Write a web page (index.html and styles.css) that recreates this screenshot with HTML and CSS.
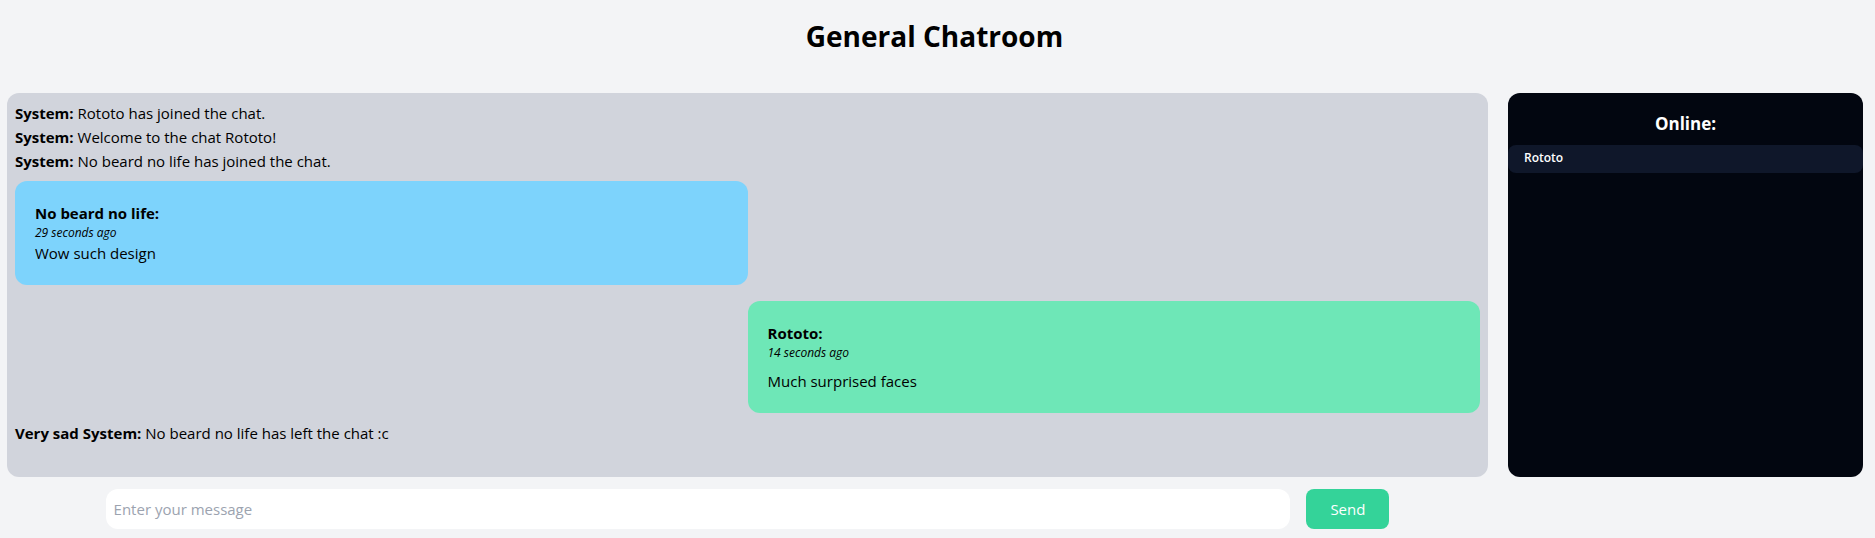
FILE: index.html
```
<!DOCTYPE html>
<html lang="en">
<head>
<meta charset="utf-8">
<meta name="viewport" content="width=device-width, initial-scale=1">
<title>General Chatroom</title>
<link rel="stylesheet" href="styles.css">
</head>
<body class="page">
<header class="header"><h1 class="title">General Chatroom</h1></header>
<main class="room">
  <section class="chat">
    <div class="messages">
      <p class="system"><strong>System:</strong> Rototo has joined the chat.</p>
      <p class="system"><strong>System:</strong> Welcome to the chat Rototo!</p>
      <p class="system"><strong>System:</strong> No beard no life has joined the chat.</p>
      <article class="message">
        <h2 class="author">No beard no life:</h2>
        <p class="time">29 seconds ago</p>
        <p class="text">Wow such design</p>
      </article>
      <article class="message message-own">
        <h2 class="author">Rototo:</h2>
        <p class="time">14 seconds ago</p>
        <p class="text">Much surprised faces</p>
      </article>
      <p class="system"><strong>Very sad System:</strong> No beard no life has left the chat :c</p>
    </div>
    <form class="composer">
      <input class="field" type="text" placeholder="Enter your message" aria-label="Enter your message">
      <button class="send" type="button">Send</button>
    </form>
  </section>
  <aside class="online">
    <h2 class="online-title">Online:</h2>
    <ul class="users"><li class="user">Rototo</li></ul>
  </aside>
</main>
</body>
</html>
```
FILE: styles.css
```
* { box-sizing: border-box; margin: 0; padding: 0; }
.page {
  display: flex;
  flex-direction: column;
  min-height: 100vh;
  background: #f3f4f6;
  color: #000;
  font: 15px/24px "Segoe UI", "Open Sans", "Noto Sans", sans-serif;
}
.header { padding: 18px 0 39px; margin-right: 6px; text-align: center; }
.title { font-size: 28px; line-height: 36px; font-weight: 700; }
.room { flex: 1; display: flex; gap: 20px; padding: 0 12px 9px 7px; }
.chat { flex: 1; min-width: 0; display: flex; flex-direction: column; gap: 12px; }
.messages {
  flex: 1;
  display: flex;
  flex-direction: column;
  padding: 8px;
  border-radius: 12px;
  background: #d1d4dc;
}
.message {
  width: 50%;
  margin: 8px 0;
  padding: 20px;
  border-radius: 12px;
  background: #7dd3fc;
}
.message-own { align-self: flex-end; background: #6ee7b7; }
.message-own .text { margin-top: 8px; }
.author { font-size: 15px; line-height: 24px; font-weight: 700; }
.time { font-size: 12px; line-height: 16px; font-style: italic; }
.composer { display: flex; justify-content: center; gap: 16px; }
.field {
  width: 80%;
  height: 40px;
  padding: 8px;
  border: 0;
  border-radius: 12px;
  background: #fff;
  font: inherit;
}
.field::placeholder { color: #9ca3af; opacity: 1; }
.send {
  padding: 8px 24px;
  border: 0;
  border-radius: 8px;
  background: #34d399;
  color: #fff;
  font: inherit;
}
.online {
  flex: 0 0 calc(20vw - 20px);
  margin-bottom: 52px;
  padding: 17px 0;
  border-radius: 12px;
  background: #020610;
  color: #fff;
}
.online-title { font-size: 17px; line-height: 28px; font-weight: 700; text-align: center; }
.users { margin-top: 7px; list-style: none; }
.user {
  padding: 5px 16px 7px;
  border-radius: 8px;
  background: #0f172a;
  font-size: 12px;
  line-height: 16px;
  font-weight: 600;
}
```
